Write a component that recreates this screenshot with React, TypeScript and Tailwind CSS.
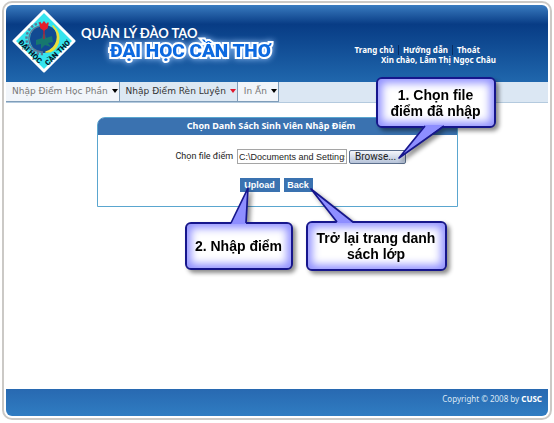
import type { ReactNode } from "react";

function CrestLogo() {
  return (
    <svg className="h-16 w-16 shrink-0" viewBox="0 0 64 64" role="img" aria-label="Đại Học Cần Thơ">
      <defs>
        <path id="crest-left" d="M6 34 L30 58" />
        <path id="crest-right" d="M36 57 L60 33" />
      </defs>
      <path d="M32 2 L62 32 L32 62 L2 32 Z" fill="#35e4ee" stroke="#fff" strokeWidth="3" strokeLinejoin="round" />
      <circle cx="32" cy="30" r="14" fill="#124a92" />
      <path
        d="M29 14 A15 15 0 0 0 31 45"
        fill="none"
        stroke="#5f7896"
        strokeWidth="2.4"
        strokeDasharray="2.4 1.8"
      />
      <path d="M29 17 A13 13 0 0 0 31 43" fill="none" stroke="#5f7896" strokeWidth="1.4" />
      <path d="M41 17 C49 26 46 39 34 43 C46 44 52 26 41 17 Z" fill="#e8e03c" stroke="#e8e03c" strokeWidth="1.6" strokeLinejoin="round" />
      <path d="M24 31 L30 29 L31 25 L33 25 L34 29 L40 27 L41 33 L36 34 L39 38 L33 36 L29 40 L29 35 L24 36 Z" fill="#16776f" />
      <path d="M32 19 V30" stroke="#b51f3a" strokeWidth="1.4" />
      <path d="M28 14 L30 16 L32 13 L34 16 L36 14 L35 19 L32 21 L29 19 Z" fill="#e51c2c" stroke="#e51c2c" strokeWidth="1.4" strokeLinejoin="round" />
      <text fontSize="7.5" className="font-['Roboto',sans-serif] font-black" fill="#06192c">
        <textPath href="#crest-left">ĐẠI HỌC</textPath>
      </text>
      <text fontSize="7.5" className="font-['Roboto',sans-serif] font-black" fill="#06192c">
        <textPath href="#crest-right">CẦN THƠ</textPath>
      </text>
    </svg>
  );
}

function Header() {
  return (
    <header className="flex h-[77px] items-start rounded-t-md bg-linear-to-b from-[#3a7cc0] via-[#083c85] via-25% to-[#2067ad] pt-1 pl-1.5 text-white">
      <CrestLogo />
      <div className="pt-4 pl-1">
        <div className="pl-px font-['Lato',sans-serif] text-[13px] leading-4 font-bold">QUẢN LÝ ĐÀO TẠO</div>
        <h1 className="pl-[30px] font-['Roboto',sans-serif] text-[19px] leading-5 font-black whitespace-nowrap text-[#0d6ae0] [-webkit-text-stroke:4px_white] [paint-order:stroke_fill] drop-shadow-[0_0_3px_#9cc8ff]">
          ĐẠI HỌC CẦN THƠ
        </h1>
      </div>
      <div className="mr-13 ml-auto pt-9 font-['Noto_Sans',sans-serif] text-[8px] leading-[10px] font-bold whitespace-nowrap">
        <nav className="mr-4 flex justify-end" aria-label="Tài khoản">
          <a href="#home" className="border-r border-[#0a2c60] pr-1">Trang chủ</a>
          <a href="#help" className="border-r border-[#0a2c60] px-1">Hướng dẫn</a>
          <a href="#logout" className="pl-1">Thoát</a>
        </nav>
        <p className="text-right">Xin chào, Lâm Thị Ngọc Châu</p>
      </div>
    </header>
  );
}

const menu = [
  { label: "Nhập Điểm Học Phần", item: "bg-[#f1f5fa] text-[#777]", arrow: "border-t-black" },
  { label: "Nhập Điểm Rèn Luyện", item: "bg-[#dce8f3] text-[#333]", arrow: "border-t-[#e0182d]" },
  { label: "In Ấn", item: "bg-[#f1f5fa] text-[#777]", arrow: "border-t-black" },
];

function MenuBar() {
  return (
    <nav className="flex h-[21px] border-b border-[#b4cade] bg-[#dbe7f3]" aria-label="Menu">
      {menu.map((m) => (
        <button
          key={m.label}
          type="button"
          className={`flex items-center gap-1 border-r border-b border-[#7f9db9] pr-px pl-1.5 font-['DejaVu_Sans',sans-serif] text-[9px] whitespace-nowrap ${m.item}`}
        >
          {m.label}
          <span className={`mb-0.5 border-x-3 border-t-4 border-x-transparent ${m.arrow}`} />
        </button>
      ))}
    </nav>
  );
}

type CalloutProps = { box: string; tail: string; points: string; line: string; children: ReactNode };

function Callout({ box, tail, points, line, children }: CalloutProps) {
  return (
    <div className={`absolute ${box} drop-shadow-[3px_3px_2px_rgba(0,0,0,0.45)]`}>
      <div className="flex h-full items-center justify-center rounded-md border-2 border-[#16168c] bg-white text-center font-['Liberation_Sans',sans-serif] text-[14px] leading-4 font-bold text-black shadow-[inset_0_0_8px_4px_#8f8fff]">
        <p>{children}</p>
      </div>
      <svg className={`pointer-events-none absolute overflow-visible ${tail}`} aria-hidden="true">
        <polygon points={points} fill="#8e8eff" />
        <polyline points={line} fill="none" stroke="#16168c" strokeWidth="1.7" strokeLinejoin="round" />
      </svg>
    </div>
  );
}

function UploadPanel() {
  return (
    <section className="relative mx-auto w-[361px]">
      <form className="rounded-t-lg border border-[#5aa6cf] bg-white" onSubmit={(e) => e.preventDefault()}>
        <h2 className="h-[17px] rounded-t-md bg-[#3a72b0] pr-3 text-center font-['Noto_Sans',sans-serif] text-[9px] leading-4 font-bold text-white">
          Chọn Danh Sách Sinh Viên Nhập Điểm
        </h2>
        <div className="flex items-center pt-[14px] pl-[78px] font-['Roboto',sans-serif] text-[9px] text-[#222]">
          <label htmlFor="score-file" className="mr-1 whitespace-nowrap">Chọn file điểm</label>
          <input
            id="score-file"
            type="text"
            readOnly
            defaultValue="C:\Documents and Settings\diem.xls"
            className="mr-0.5 h-[15px] w-[110px] border border-[#a5a5a5] bg-white px-px font-['Liberation_Sans',sans-serif] text-[9px]"
          />
          <button
            type="button"
            className="h-[14px] w-[57px] rounded-xs border border-[#5c6f8c] bg-linear-to-b from-[#f4f6fa] to-[#b6c3d9] pr-1 text-[10px] leading-3"
          >
            Browse...
          </button>
        </div>
        <div className="flex justify-center gap-1 pt-[14px] pr-0.5 pb-[14px] font-['Liberation_Sans',sans-serif] text-[9px] leading-[14px] font-bold text-white">
          <button type="submit" className="h-[14px] w-10 bg-[#3a72b0]">Upload</button>
          <button type="button" className="h-[14px] w-[29px] bg-[#3a72b0]">Back</button>
        </div>
      </form>

      <Callout
        box="top-[-40px] left-[279px] h-[51px] w-[120px]"
        tail="top-[49px] left-[22px] h-8 w-12"
        points="27,-1 1,32 46,-1"
        line="27,0 1,32 46,0"
      >
        1. Chọn file
        <br />
        điểm đã nhập
      </Callout>
      <Callout
        box="top-[105px] left-[88px] h-[48px] w-[108px]"
        tail="top-[-34px] left-[44px] h-9 w-5"
        points="2,36 19,0 17,36"
        line="2,35 19,0 17,35"
      >
        2. Nhập điểm
      </Callout>
      <Callout
        box="top-[104px] left-[209px] h-[50px] w-[141px]"
        tail="top-[-32px] left-[4px] h-9 w-12"
        points="27,34 1,0 43,34"
        line="27,33 1,0 43,33"
      >
        Trở lại trang danh
        <br />
        sách lớp
      </Callout>
    </section>
  );
}

export default function App() {
  return (
    <div className="h-screen bg-white px-0.5 pt-px pb-[3px]">
      <div className="flex h-full flex-col rounded-[10px] border-2 border-[#cbc9c6] bg-white p-0.5">
        <Header />
        <MenuBar />
        <main className="grow pt-[14px]">
          <UploadPanel />
        </main>
        <footer className="h-[27px] rounded-b-md bg-linear-to-b from-[#2869b1] to-[#307dc2] pt-[5px] pr-1.5 text-right font-['Noto_Sans',sans-serif] text-[8px] leading-[10px] text-[#dce8f5]">
          Copyright © 2008 by <b className="text-white">CUSC</b>
        </footer>
      </div>
    </div>
  );
}
